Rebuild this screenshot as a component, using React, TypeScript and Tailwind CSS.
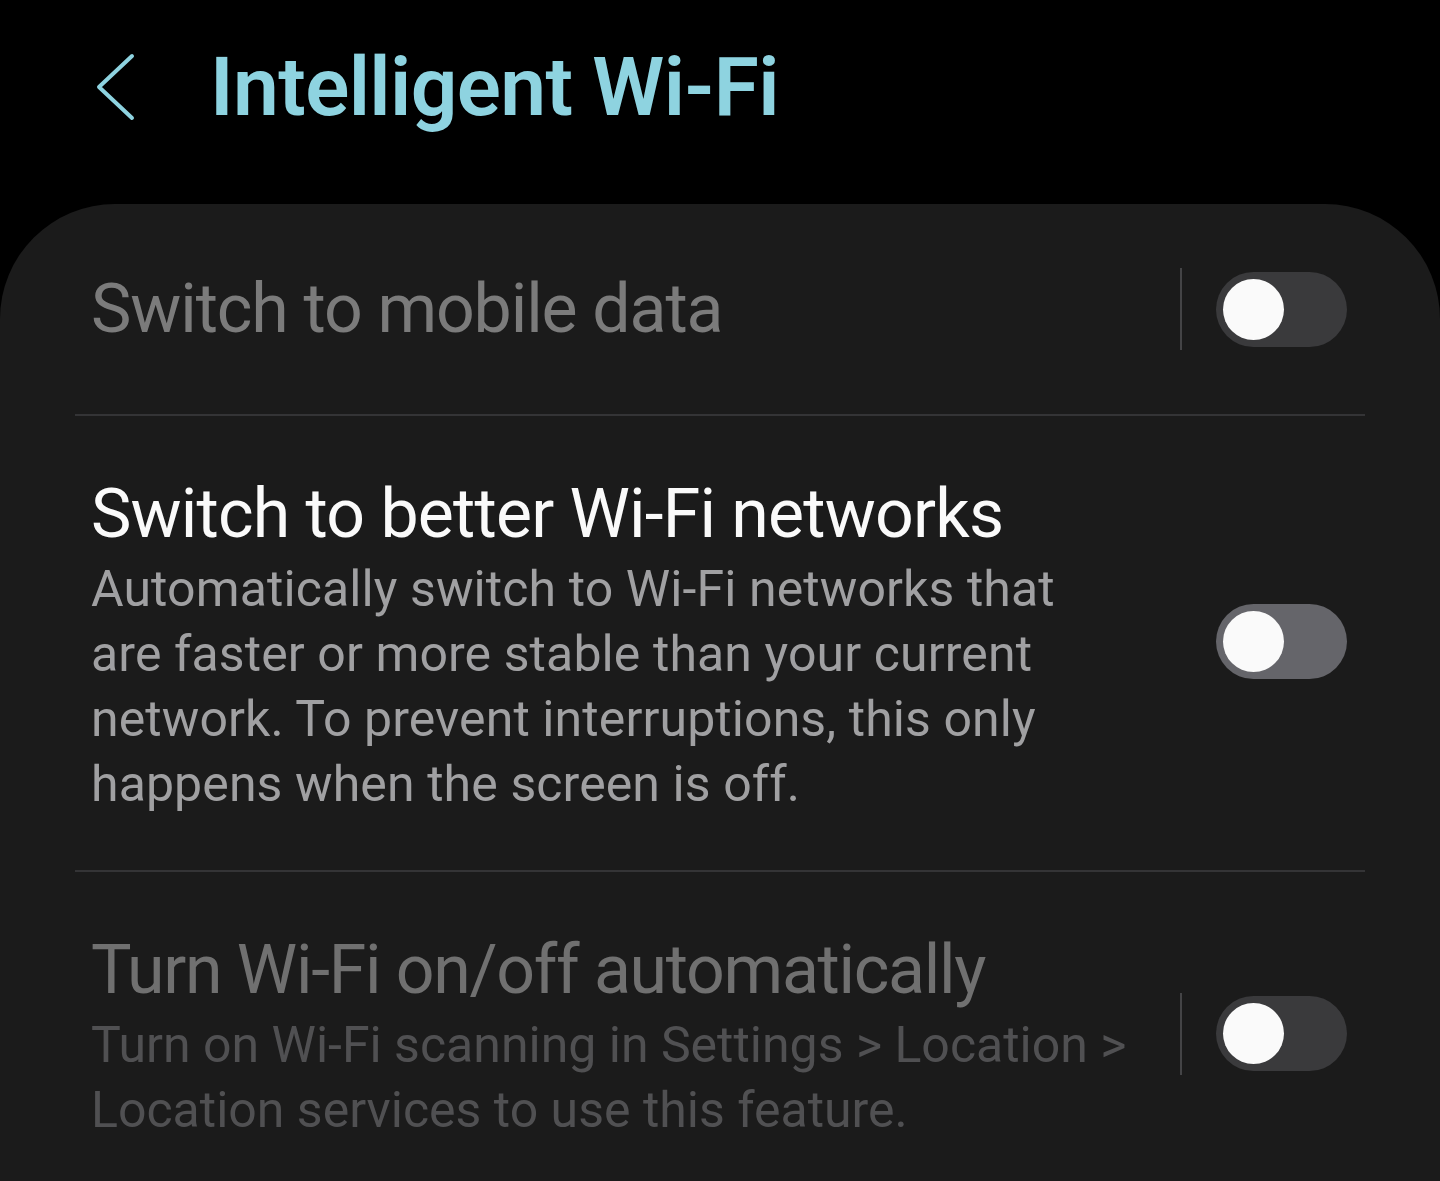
import React from 'react';

const font = { fontFamily: 'Roboto, "Noto Sans", sans-serif' };

function Toggle({ dim, className = '' }: { dim?: boolean; className?: string }) {
  return (
    <div
      className={`w-[131px] h-[75px] rounded-full flex items-center pl-[7px] shrink-0 ${
        dim ? 'bg-[#3a3a3c]' : 'bg-[#65656a]'
      } ${className}`}
    >
      <div className="w-[61px] h-[61px] rounded-full bg-[#fafafa]" />
    </div>
  );
}

function Separator({ className = '' }: { className?: string }) {
  return <div className={`w-[2px] h-[82px] bg-[#444446] mr-[34px] shrink-0 ${className}`} />;
}

export default function App() {
  return (
    <div
      className="w-[1440px] h-[1181px] bg-black overflow-hidden flex flex-col"
      style={font}
    >
      {/* Header */}
      <div className="h-[204px] shrink-0 flex items-start pt-[40px] pl-[96px]">
        <div className="h-[94px] w-[114px] flex items-center">
          <svg width="40" height="68" viewBox="0 0 40 68" fill="none">
            <path
              d="M36 3 L3 34 L36 65"
              stroke="#8ed3e0"
              strokeWidth="4"
              strokeLinecap="round"
              strokeLinejoin="round"
            />
          </svg>
        </div>
        <h1 className="text-[82px] leading-[94px] font-semibold text-[#8ed3e0] tracking-[-0.6px]">
          Intelligent Wi-Fi
        </h1>
      </div>

      {/* Card */}
      <div className="flex-1 bg-[#1b1b1b] rounded-t-[115px]">
        {/* Row 1 */}
        <div className="h-[210px] flex items-center pl-[91px] pr-[93px]">
          <div className="flex-1 text-[68px] leading-[72px] tracking-[-1.1px] text-[#7b7b7b]">
            Switch to mobile data
          </div>
          <Separator />
          <Toggle dim />
        </div>
        <div className="mx-[75px] h-[2px] bg-[#343436]" />

        {/* Row 2 */}
        <div className="flex items-center pl-[91px] pr-[93px] pt-[62px] pb-[53px]">
          <div className="flex-1">
            <div className="text-[68px] leading-[72px] tracking-[-0.8px] text-[#fafafa]">
              Switch to better Wi-Fi networks
            </div>
            <div className="mt-[7px] text-[50px] leading-[65px] tracking-[0.1px] text-[#a0a0a2]">
              Automatically switch to Wi-Fi networks that
              <br />
              are faster or more stable than your current
              <br />
              network. To prevent interruptions, this only
              <br />
              happens when the screen is off.
            </div>
          </div>
          <Toggle className="mb-[12px]" />
        </div>
        <div className="mx-[75px] h-[2px] bg-[#343436]" />

        {/* Row 3 */}
        <div className="flex items-center pl-[91px] pr-[93px] pt-[62px] pb-[53px]">
          <div className="flex-1">
            <div className="text-[68px] leading-[72px] tracking-[-1.3px] text-[#707070]">
              Turn Wi-Fi on/off automatically
            </div>
            <div className="mt-[7px] text-[50px] leading-[65px] text-[#505052]">
              Turn on Wi-Fi scanning in Settings &gt; Location &gt;
              <br />
              Location services to use this feature.
            </div>
          </div>
          <Separator className="mb-[10px]" />
          <Toggle dim className="mb-[10px]" />
        </div>
      </div>
    </div>
  );
}
